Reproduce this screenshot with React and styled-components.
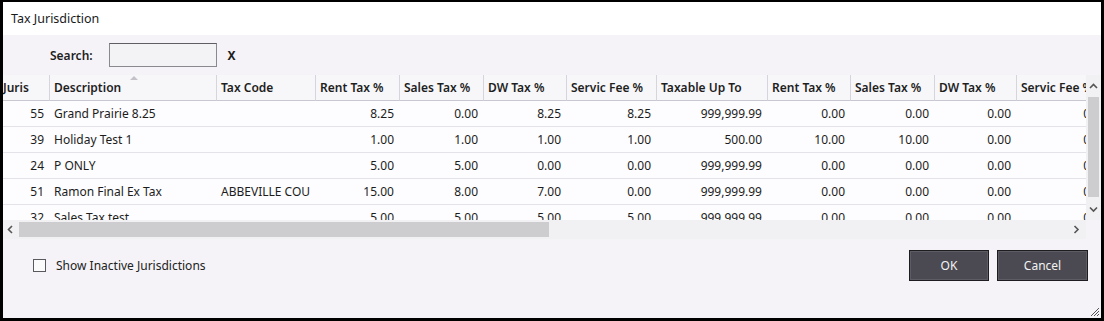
import React from "react"
import styled, { createGlobalStyle } from "styled-components"

const GlobalStyle = createGlobalStyle`
  html, body {
    margin: 0;
    padding: 0;
    background: #000;
  }
  body {
    font-family: "Noto Sans", "Open Sans", sans-serif;
    font-size: 12px;
    color: #1e1e1e;
  }
`

const COLS = "46px 167px 99px 84px 84px 83px 90px 111px 83px 84px 82px 96px"

const columns = [
  { title: "Juris", align: "right" },
  { title: "Description", align: "left", sorted: true },
  { title: "Tax Code", align: "left" },
  { title: "Rent Tax %", align: "right" },
  { title: "Sales Tax %", align: "right" },
  { title: "DW Tax %", align: "right" },
  { title: "Servic Fee %", align: "right" },
  { title: "Taxable Up To", align: "right" },
  { title: "Rent Tax %", align: "right" },
  { title: "Sales Tax %", align: "right" },
  { title: "DW Tax %", align: "right" },
  { title: "Servic Fee %", align: "right" },
]

const rows = [
  ["55", "Grand Prairie 8.25", "", "8.25", "0.00", "8.25", "8.25", "999,999.99", "0.00", "0.00", "0.00", "0.00"],
  ["39", "Holiday Test 1", "", "1.00", "1.00", "1.00", "1.00", "500.00", "10.00", "10.00", "0.00", "0.00"],
  ["24", "P ONLY", "", "5.00", "5.00", "0.00", "0.00", "999,999.99", "0.00", "0.00", "0.00", "0.00"],
  ["51", "Ramon Final Ex Tax", "ABBEVILLE COU", "15.00", "8.00", "7.00", "0.00", "999,999.99", "0.00", "0.00", "0.00", "0.00"],
  ["32", "Sales Tax test", "", "5.00", "5.00", "5.00", "5.00", "999,999.99", "0.00", "0.00", "0.00", "0.00"],
]

const Window = styled.div`
  position: relative;
  box-sizing: border-box;
  width: 1104px;
  height: 321px;
  border: solid #000;
  border-width: 2px 3px 3px 3px;
  background: #f5f3f7;
  display: flex;
  flex-direction: column;
  overflow: hidden;
`

const TitleBar = styled.div`
  height: 33px;
  background: #fff;
  display: flex;
  align-items: center;
  padding-left: 8px;
  font-size: 12.5px;
  color: #1a1a1a;
`

const SearchRow = styled.div`
  height: 40px;
  display: flex;
  align-items: center;
  padding-left: 47px;
`

const SearchLabel = styled.span`
  font-weight: 600;
  margin-right: 16px;
`

const SearchInput = styled.div`
  width: 106px;
  height: 22px;
  border: 1px solid #8a8a8e;
  border-top-color: #5f5f63;
  background: #f3f2f5;
  margin-right: 11px;
`

const ClearX = styled.span`
  font-weight: 700;
`

const GridFrame = styled.div`
  display: grid;
  grid-template-columns: 1fr 15px;
  grid-template-rows: 145px 19px;
`

const Viewport = styled.div`
  overflow: hidden;
  background: #fdfcfe;
`

const Table = styled.div`
  display: grid;
  grid-template-columns: ${COLS};
  width: max-content;
`

const HeaderCell = styled.div`
  position: relative;
  height: 25px;
  line-height: 25px;
  padding-left: ${(p) => (p.first ? "0" : "4px")};
  border-left: ${(p) => (p.first ? "none" : "1px solid #d6d4dc")};
  border-bottom: 1px solid #c9c7cf;
  background: #f7f6f9;
  font-weight: 600;
  white-space: nowrap;
  overflow: hidden;
`

const SortMark = styled.span`
  position: absolute;
  top: 1px;
  left: 80px;
  width: 0;
  height: 0;
  border-left: 4px solid transparent;
  border-right: 4px solid transparent;
  border-bottom: 4px solid #c4c2c8;
`

const Cell = styled.div`
  height: 25px;
  line-height: 25px;
  border-bottom: 1px solid #e6e2ea;
  text-align: ${(p) => p.align};
  padding: ${(p) => (p.align === "right" ? "0 5px 0 0" : "0 0 0 5px")};
  white-space: nowrap;
  overflow: hidden;
  color: #1c1c1c;
`

const VScroll = styled.div`
  background: #f1f0f3;
  display: flex;
  flex-direction: column;
  align-items: center;
`

const ArrowBox = styled.div`
  height: 22px;
  display: flex;
  align-items: center;
  justify-content: center;
  color: #606060;
  flex-shrink: 0;
`

const VThumb = styled.div`
  width: 11px;
  height: 100px;
  background: #cdcdcf;
`

const VTrack = styled.div`
  flex: 1;
`

const HScroll = styled.div`
  background: #f1f0f3;
  display: flex;
  align-items: center;
  padding: 0 6px 0 4px;
`

const HThumb = styled.div`
  width: 530px;
  height: 15px;
  background: #cdcdcf;
  margin-left: 5px;
`

const HTrack = styled.div`
  flex: 1;
`

const Corner = styled.div`
  background: #f5f3f7;
`

const Footer = styled.div`
  flex: 1;
  display: flex;
  justify-content: space-between;
  align-items: flex-start;
  padding: 11px 13px 0 30px;
`

const CheckLabel = styled.label`
  display: flex;
  align-items: center;
  margin-top: 7px;
  color: #222;
`

const Box = styled.span`
  width: 11px;
  height: 11px;
  border: 1px solid #5a5a5e;
  background: #fbfbfc;
  margin-right: 10px;
`

const Buttons = styled.div`
  display: flex;
  gap: 8px;
`

const Button = styled.button`
  width: ${(p) => p.w}px;
  height: 31px;
  background: #4b4a53;
  border: 1px solid #1d1d20;
  box-shadow: inset 0 0 0 1px #5d5c65;
  color: #f2f2f2;
  font-family: "Noto Sans", "Open Sans", sans-serif;
  font-size: 12px;
  padding: 0;
`

const Grip = styled.svg`
  position: absolute;
  right: 1px;
  bottom: 1px;
`

function Chevron ({ dir }) {
  const paths = {
    up: "M1 5 L4.5 1.5 L8 5",
    down: "M1 1.5 L4.5 5 L8 1.5",
    left: "M5 1 L1.5 4.5 L5 8",
    right: "M1.5 1 L5 4.5 L1.5 8",
  }
  const vertical = dir === "up" || dir === "down"
  return (
    <svg width={vertical ? 9 : 7} height={vertical ? 7 : 9} viewBox={vertical ? "0 0 9 7" : "0 0 7 9"}>
      <path d={paths[dir]} fill="none" stroke="#555" strokeWidth="1.6" />
    </svg>
  )
}

function App () {
  return (
    <Window>
      <GlobalStyle />
      <TitleBar>Tax Jurisdiction</TitleBar>
      <SearchRow>
        <SearchLabel>Search:</SearchLabel>
        <SearchInput />
        <ClearX>X</ClearX>
      </SearchRow>
      <GridFrame>
        <Viewport>
          <Table>
            {columns.map((col, i) => (
              <HeaderCell key={i} first={i === 0}>
                {col.title}
                {col.sorted && <SortMark />}
              </HeaderCell>
            ))}
            {rows.map((row, r) =>
              row.map((value, c) => (
                <Cell key={r + "-" + c} align={columns[c].align}>
                  {value}
                </Cell>
              ))
            )}
          </Table>
        </Viewport>
        <VScroll>
          <ArrowBox><Chevron dir="up" /></ArrowBox>
          <VThumb />
          <VTrack />
          <ArrowBox><Chevron dir="down" /></ArrowBox>
        </VScroll>
        <HScroll>
          <Chevron dir="left" />
          <HThumb />
          <HTrack />
          <Chevron dir="right" />
        </HScroll>
        <Corner />
      </GridFrame>
      <Footer>
        <CheckLabel>
          <Box />
          Show Inactive Jurisdictions
        </CheckLabel>
        <Buttons>
          <Button w={80}>OK</Button>
          <Button w={91}>Cancel</Button>
        </Buttons>
      </Footer>
      <Grip width="12" height="12" viewBox="0 0 12 12">
        <path d="M11 3 L3 11 M11 6 L6 11 M11 9 L9 11" stroke="#555" strokeWidth="1" />
      </Grip>
    </Window>
  )
}

export default App
